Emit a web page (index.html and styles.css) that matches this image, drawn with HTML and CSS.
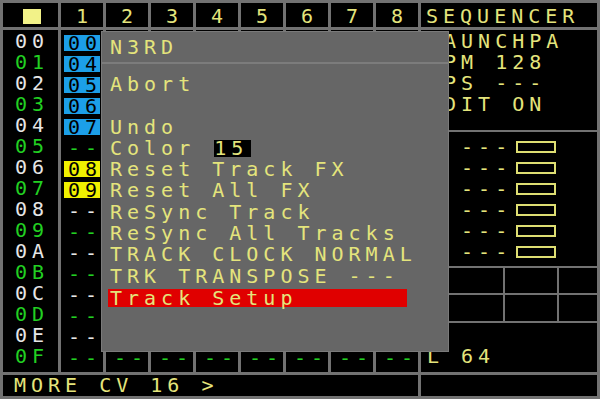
FILE: index.html
```html
<!DOCTYPE html>
<html lang="en">
<head>
  <meta charset="UTF-8" />
  <title>Sequencer</title>
  <meta name="viewport" content="width=device-width, initial-scale=1" />
  <link rel="stylesheet" href="styles.css">
</head>
<body>
  <div class="screen">
    <div class="grid">
      <div class="corner"><span class="swatch"></span></div>
      <div class="colhead">1</div>
      <div class="colhead">2</div>
      <div class="colhead">3</div>
      <div class="colhead">4</div>
      <div class="colhead">5</div>
      <div class="colhead">6</div>
      <div class="colhead">7</div>
      <div class="colhead">8</div>
      <div class="title">SEQUENCER</div>

      <div class="labels">
        <div class="row even">00</div>
        <div class="row odd">01</div>
        <div class="row even">02</div>
        <div class="row odd">03</div>
        <div class="row even">04</div>
        <div class="row odd">05</div>
        <div class="row even">06</div>
        <div class="row odd">07</div>
        <div class="row even">08</div>
        <div class="row odd">09</div>
        <div class="row even">0A</div>
        <div class="row odd">0B</div>
        <div class="row even">0C</div>
        <div class="row odd">0D</div>
        <div class="row even">0E</div>
        <div class="row odd">0F</div>
      </div>

      <div class="track">
        <div class="cell"><span class="blue">00</span></div>
        <div class="cell"><span class="blue">04</span></div>
        <div class="cell"><span class="blue">05</span></div>
        <div class="cell"><span class="blue">06</span></div>
        <div class="cell"><span class="blue">07</span></div>
        <div class="cell odd"><span>--</span></div>
        <div class="cell"><span class="yellow">08</span></div>
        <div class="cell"><span class="yellow">09</span></div>
        <div class="cell even"><span>--</span></div>
        <div class="cell odd"><span>--</span></div>
        <div class="cell even"><span>--</span></div>
        <div class="cell odd"><span>--</span></div>
        <div class="cell even"><span>--</span></div>
        <div class="cell odd"><span>--</span></div>
        <div class="cell even"><span>--</span></div>
        <div class="cell odd"><span>--</span></div>
      </div>
      <div class="track empty"><div class="cell odd"><span>--</span></div></div>
      <div class="track empty"><div class="cell odd"><span>--</span></div></div>
      <div class="track empty"><div class="cell odd"><span>--</span></div></div>
      <div class="track empty"><div class="cell odd"><span>--</span></div></div>
      <div class="track empty"><div class="cell odd"><span>--</span></div></div>
      <div class="track empty"><div class="cell odd"><span>--</span></div></div>
      <div class="track empty"><div class="cell odd"><span>--</span></div></div>

      <div class="side">
        <div class="info">
          <div class="line">LAUNCHPA</div>
          <div class="line">BPM 128</div>
          <div class="line">TPS ---</div>
          <div class="line">EDIT ON</div>
        </div>
        <div class="rule"></div>
        <div class="tracks">
          <div class="tline"><span>1 ---</span><span class="box"></span></div>
          <div class="tline"><span>2 ---</span><span class="box"></span></div>
          <div class="tline"><span>3 ---</span><span class="box"></span></div>
          <div class="tline"><span>4 ---</span><span class="box"></span></div>
          <div class="tline"><span>5 ---</span><span class="box"></span></div>
          <div class="tline"><span>6 ---</span><span class="box"></span></div>
        </div>
        <div class="mini">
          <div></div><div></div><div></div>
          <div></div><div></div><div></div>
        </div>
        <div class="line length">L 64</div>
      </div>

      <div class="status">MORE CV 16 &gt;</div>
      <div class="status-right"></div>
    </div>

    <div class="popup">
      <div class="popup-title">N3RD</div>
      <div class="menu">
        <div class="item">Abort</div>
        <div class="item"></div>
        <div class="item">Undo</div>
        <div class="item">Color <span class="value">15</span></div>
        <div class="item">Reset Track FX</div>
        <div class="item">Reset All FX</div>
        <div class="item">ReSync Track</div>
        <div class="item">ReSync All Tracks</div>
        <div class="item">TRACK CLOCK NORMAL</div>
        <div class="item">TRK TRANSPOSE ---</div>
        <div class="item selected">Track Setup</div>
      </div>
    </div>
  </div>
</body>
</html>
```

FILE: styles.css
```css
body {
  margin: 0;
  background: #727272;
  font-family: "DejaVu Sans Mono", monospace;
  font-size: 20px;
  letter-spacing: 5px;
  color: #e4e47c;
  white-space: nowrap;
}
.screen {
  position: relative;
  width: 600px;
  height: 399px;
  overflow: hidden;
}
.grid {
  display: grid;
  grid-template-columns: 55px repeat(8, 42px) 176px;
  grid-template-rows: 24px 342px 21px;
  gap: 3px;
  padding: 3px;
}
.grid > div { background: #000; overflow: hidden; }

/* header row */
.corner { padding: 6px 0 0 20px; box-sizing: border-box; }
.swatch {
  display: block;
  width: 18px;
  height: 15px;
  background: #f2f288;
}
.colhead, .title {
  padding-top: 3px;
  line-height: 21px;
  box-sizing: border-box;
}
.colhead { text-align: center; padding-left: 5px; }
.title { padding-left: 5px; }

/* rows */
.labels, .track { padding-top: 1px; }
.row {
  height: 21px;
  line-height: 21px;
  padding-left: 12px;
}
.even { color: #e6e6e6; }
.odd { color: #22d022; }
.cell {
  height: 21px;
  line-height: 21px;
  padding-left: 3px;
}
.cell span {
  display: inline-block;
  padding-left: 4px;
  line-height: 16px;
  vertical-align: middle;
}
.cell .blue, .cell .yellow {
  width: 36px;
  box-sizing: border-box;
  color: #000;
}
.cell .blue { background: #1c9fe8; }
.cell .yellow { background: #f0f000; }
.track.empty {
  display: flex;
  flex-direction: column;
  justify-content: flex-end;
  padding-bottom: 5px;
}
.track.empty .cell { padding-left: 4px; }

/* right panel */
.side {
  display: flex;
  flex-direction: column;
  padding: 1px 0 5px;
  box-sizing: border-box;
}
.line {
  height: 21px;
  line-height: 21px;
  padding-left: 6px;
}
.rule {
  height: 2px;
  margin-top: 15px;
  background: #727272;
}
.tracks { padding-top: 4px; }
.tline {
  display: flex;
  align-items: center;
  height: 21px;
  padding-left: 6px;
}
.box {
  width: 40px;
  height: 12px;
  margin-left: 4px;
  box-sizing: border-box;
  border: 2px solid #dede72;
}
.mini {
  display: grid;
  grid-template-columns: 82px 52px 1fr;
  grid-template-rows: 25px 26px;
  gap: 2px;
  padding: 2px 0;
  margin-top: 4px;
  background: #727272;
}
.mini div { background: #000; }
.length { margin-top: auto; }

/* bottom bar */
.status {
  grid-column: 1 / 10;
  line-height: 21px;
  padding-left: 11px;
}

/* popup menu */
.popup {
  position: absolute;
  left: 101px;
  top: 31px;
  width: 348px;
  height: 321px;
  box-sizing: border-box;
  background: #666;
  border: 1px solid #7a7a7a;
  padding-left: 8px;
}
.popup-title {
  line-height: 21px;
  padding: 5px 0 4px 8px;
  margin-left: -8px;
  border-bottom: 2px solid #7c7c7c;
}
.menu { padding-top: 10px; }
.item {
  height: 21.3px;
  line-height: 21.3px;
  white-space: pre;
}
.value {
  display: inline-block;
  margin-left: 2px;
  padding-right: 3px;
  line-height: 17px;
  background: #000;
}
.item.selected {
  height: 18px;
  line-height: 18px;
  margin: 1.65px 0 0 -2px;
  padding-left: 2px;
  width: 297px;
  background: #e00000;
}
```
